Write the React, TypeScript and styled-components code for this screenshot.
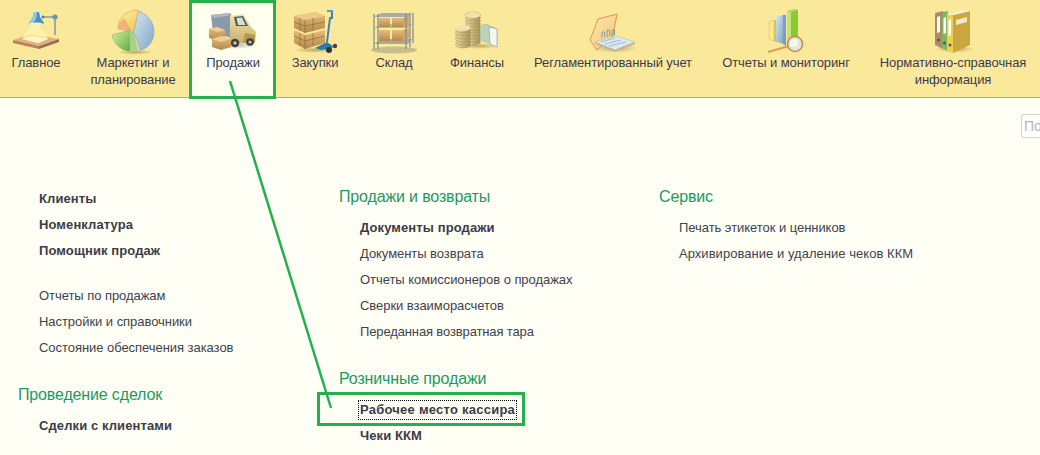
import React from 'react';
import styled, { createGlobalStyle } from 'styled-components';

const Global = createGlobalStyle`
  html, body { margin: 0; padding: 0; height: 100%; overflow: hidden; background: #fffff5; }
  #root { width: 1040px; height: 455px; }
`;
const Page = styled.div`
  position: relative; width: 1040px; height: 455px; overflow: hidden;
  background: #fffff5; color: #3c3c4a;
  font-family: "Liberation Sans", Arial, sans-serif; font-size: 13px;
`;
const TopBar = styled.nav`
  display: flex; height: 97px; background: #fbe99b; border-bottom: 1px solid #c4ae3a; box-sizing: content-box;
`;
const NavItem = styled.div<{ $w: number; $active?: boolean; $ml?: number }>`
  width: ${p => p.$w}px; margin-left: ${p => p.$ml ?? 0}px; flex: none;
  display: flex; flex-direction: column; align-items: center;
  padding: 8px 0 0 ${p => (p.$active ? 2 : 0)}px; box-sizing: border-box;
  background: ${p => (p.$active ? '#fffff0' : 'transparent')};
`;
const NavIcon = styled.svg`
  width: 48px; height: 48px; flex: none; display: block;
`;
const NavLabel = styled.div`
  margin-top: -1px; text-align: center; line-height: 16.5px; letter-spacing: -0.1px; color: #3b3b50; white-space: pre-line;
`;
const SearchRow = styled.div`
  display: flex; justify-content: flex-end; margin-top: 16px; height: 24px;
`;
const SearchBox = styled.div`
  width: 19px; height: 24px; box-sizing: border-box; border: 1px solid #d4d4d4; border-right: 0; border-radius: 3px 0 0 3px;
  padding-left: 2px; line-height: 22px; font-size: 14px; color: #b5b5b5; background: #fffffb; white-space: nowrap;
`;
const Columns = styled.div`
  display: grid; grid-template-columns: 321px 320px 1fr; padding: 48px 0 0 18px;
`;
const Column = styled.div<{ $pt?: number }>`
  display: flex; flex-direction: column; padding-top: ${p => p.$pt ?? 0}px;
`;
const Heading = styled.h3<{ $mt?: number }>`
  margin: ${p => p.$mt ?? 0}px 0 8px; font-weight: 400; font-size: 16px; line-height: 20px; letter-spacing: -0.15px; color: #1a9a62;
`;
const LinkList = styled.div<{ $mt?: number; $pl?: number }>`
  display: flex; flex-direction: column; padding-left: ${p => p.$pl ?? 21}px; margin-top: ${p => p.$mt ?? 0}px;
`;
const Item = styled.div<{ $bold?: boolean; $ls?: number }>`
  height: 26px; line-height: 26px; white-space: nowrap; font-weight: ${p => (p.$bold ? 700 : 400)};
  letter-spacing: ${p => p.$ls ?? (p.$bold ? 0.1 : -0.05)}px;
  color: ${p => (p.$bold ? '#3c3c48' : '#42424e')};
`;
const FocusedText = styled.span`
  display: inline-block; line-height: 18px; letter-spacing: 0.24px; outline: 1px dotted #000; padding: 0 1px; margin-left: -1px;
`;
const Mark = styled.div<{ $x: number; $y: number; $w: number; $h: number }>`
  position: absolute; left: ${p => p.$x}px; top: ${p => p.$y}px; width: ${p => p.$w}px; height: ${p => p.$h}px;
  box-sizing: border-box; border: 3px solid #22b14c; pointer-events: none;
`;
const Arrow = styled.svg`
  position: absolute; left: 0; top: 0; width: 1040px; height: 455px; pointer-events: none;
`;

const Defs = () => (
  <svg width="0" height="0" style={{ position: 'absolute' }}>
    <defs>
      <linearGradient id="box" x1="0" y1="0" x2="0" y2="1"><stop offset="0" stopColor="#e6bd78" /><stop offset="1" stopColor="#b58a4a" /></linearGradient>
      <linearGradient id="blue" x1="0" y1="0" x2="1" y2="1"><stop offset="0" stopColor="#d5e6f2" /><stop offset="1" stopColor="#7fa6c6" /></linearGradient>
      <linearGradient id="green" x1="0" y1="0" x2="1" y2="1"><stop offset="0" stopColor="#d9f0a8" /><stop offset="1" stopColor="#62ad3e" /></linearGradient>
      <linearGradient id="yel" x1="0" y1="0" x2="1" y2="1"><stop offset="0" stopColor="#fff2a8" /><stop offset="1" stopColor="#f0c040" /></linearGradient>
      <linearGradient id="coin" x1="0" y1="0" x2="1" y2="0"><stop offset="0" stopColor="#ead9a0" /><stop offset="1" stopColor="#a89258" /></linearGradient>
      <linearGradient id="cover" x1="0" y1="0" x2="1" y2="1"><stop offset="0" stopColor="#fbe8ac" /><stop offset="1" stopColor="#f3c878" /></linearGradient>
      <linearGradient id="cab" x1="0" y1="0" x2="0" y2="1"><stop offset="0" stopColor="#f2e3a4" /><stop offset="1" stopColor="#c8b06a" /></linearGradient>
      <radialGradient id="shadow"><stop offset="0" stopColor="#6b5a20" stopOpacity=".45" /><stop offset="1" stopColor="#6b5a20" stopOpacity="0" /></radialGradient>
    </defs>
  </svg>
);

const Lamp = () => (
  <NavIcon viewBox="0 0 48 48">
    <path d="M1 32 19 26 47 31 27 38Z" fill="#e0b283" />
    <path d="M1 32 27 38V41L1 35Z" fill="#b9835a" /><path d="M27 38 47 31V34L27 41Z" fill="#9a6e4c" />
    <path d="M10 31 20 28 36 31 26 35Z" fill="#fffbe8" />
    <path d="M20 16H27L36 31 26 35 10 31Z" fill="#fff6b0" opacity=".75" />
    <path d="M31 9H43V27" fill="none" stroke="#8d9aa3" strokeWidth="1.6" />
    <circle cx="43" cy="9" r="2.6" fill="#6f93ab" /><circle cx="31" cy="9" r="1.5" fill="#5c7f96" />
    <path d="M22 4h5l1 5 4 6c-3 3-12 3-15 0l4-6Z" fill="#3f93c9" />
    <path d="M22 4h3l-1 7-4 5-3-1 4-6Z" fill="#8ccbe8" />
    <ellipse cx="24" cy="16" rx="6.5" ry="1.6" fill="#fdf4b0" />
  </NavIcon>
);
const Pie = () => (
  <NavIcon viewBox="0 0 48 48">
    <ellipse cx="26" cy="44" rx="18" ry="3" fill="url(#shadow)" />
    <path d="M9 21C8 11 17 2 28 2L32 4 25 24Z" fill="url(#yel)" stroke="#e6a860" strokeWidth=".7" />
    <path d="M9 21C9 17 11 13 15 10L23 23Z" fill="#f2b07a" />
    <path d="M29 4C39 5 45 15 45 24 45 33 39 41 31 42L25 24Z" fill="url(#blue)" stroke="#7d9db5" strokeWidth=".5" />
    <path d="M3 27 21 22V43C12 43 5 36 3 27Z" fill="url(#green)" stroke="#79b158" strokeWidth=".5" />
    <path d="M21 22 25 24 29 42 21 43Z" fill="#a9d18b" />
  </NavIcon>
);
const Truck = () => (
  <NavIcon viewBox="0 0 48 48">
    <ellipse cx="26" cy="37" rx="22" ry="4" fill="url(#shadow)" />
    <path d="M2 7 21 5 22 8V30L4 24Z" fill="#8b99ad" /><path d="M2 7 21 5 23 7 5 10Z" fill="#aeb9c6" />
    <path d="M21 8 34 6 42 19 47 24 46 35 21 35Z" fill="url(#cab)" />
    <path d="M25 9 34 8 39 18 27 18Z" fill="#4e5a5e" /><path d="M27.5 10 33 9.5 36.5 17 29 17Z" fill="#d7dfd6" />
    <path d="M36 25 46 27 46 35 34 35Z" fill="#b4984e" />
    <circle cx="26" cy="35" r="4.2" fill="#3d3d3d" /><circle cx="26" cy="35" r="1.8" fill="#c4c4c4" />
    <circle cx="41" cy="34" r="3.8" fill="#3d3d3d" /><circle cx="41" cy="34" r="1.6" fill="#c4c4c4" />
    <path d="M0 21 8 19 16 22V31L8 33 0 30Z" fill="url(#box)" /><path d="M0 21 8 19 16 22 8 24Z" fill="#eecd92" />
    <path d="M3 31 13 28 22 31V39L12 42 3 39Z" fill="url(#box)" /><path d="M3 31 13 28 22 31 12 34Z" fill="#eecd92" />
  </NavIcon>
);
const Pallet = () => (
  <NavIcon viewBox="0 0 48 48">
    <ellipse cx="24" cy="42" rx="22" ry="3" fill="url(#shadow)" />
    <path d="M3 8 24 4 34 8V20L14 25 3 20Z" fill="url(#box)" /><path d="M3 8 24 4 34 8 14 12Z" fill="#ecca8e" />
    <path d="M3 22 14 27 34 22V35L14 41 3 35Z" fill="url(#box)" />
    <path d="M14 12V25M14 27V41M9 10V23M9 25V38M22 10V23M22 25V37M3 14 14 18 34 14M3 28 14 33 34 28" stroke="#8d6a38" strokeWidth=".7" fill="none" />
    <path d="M36 3h5v7h-2L36 34" stroke="#3f82b5" strokeWidth="2" fill="none" />
    <path d="M36 3h6" stroke="#5b9ecf" strokeWidth="2" />
    <path d="M24 40 36 34 43 39 37 41 30 42Z" fill="#2e78ae" />
    <circle cx="38" cy="42" r="3" fill="#333" /><circle cx="44" cy="38" r="2.2" fill="#444" />
  </NavIcon>
);
const Shelf = () => (
  <NavIcon viewBox="0 0 48 48">
    <ellipse cx="24" cy="42" rx="23" ry="3.5" fill="#8a8a7a" opacity=".45" />
    <path d="M5 19 12 16H42L38 20H5Z" fill="#b1b5b8" />
    <path d="M5 35 12 31H42L38 36H5Z" fill="#a4a8ab" />
    <path d="M5 8 12 5H42L38 9H5Z" fill="#a8acaf" />
    <path d="M9 10H20V19H9ZM22 10H33V19H22Z" fill="url(#box)" />
    <path d="M9 22H20V33H9ZM22 22H33V33H22Z" fill="url(#box)" />
    <path d="M33 10 39 8V17L33 19ZM33 22 39 20V30L33 33Z" fill="#cfa865" />
    <path d="M4 6V41M8 6V41M36 6V41M40 6V39M43 5V35" stroke="#8a8f93" strokeWidth="1.3" fill="none" />
  </NavIcon>
);
const Coins = () => {
  const stack = (x: number, top: number, bottom: number, rx: number) => {
    const rows = [];
    for (let y = bottom; y >= top; y -= 3) rows.push(<ellipse key={y} cx={x} cy={y} rx={rx} ry="3" fill="url(#coin)" stroke="#96844e" strokeWidth=".4" />);
    return <g>{rows}</g>;
  };
  return (
    <NavIcon viewBox="0 0 48 48">
      <ellipse cx="26" cy="38" rx="20" ry="3" fill="url(#shadow)" />
      {stack(20, 7, 34, 7.5)}
      <ellipse cx="20" cy="7" rx="7.5" ry="3" fill="#efe2b0" />
      <path d="M27 18 33 16 44 21V39L36 35 27 32Z" fill="#bcd2b8" stroke="#8aa088" strokeWidth=".4" />
      <path d="M36 19 44 21V39L37 36Z" fill="#f5f7f2" stroke="#8b9a95" strokeWidth=".6" />
      {stack(10, 20, 37, 7.5)}
      <ellipse cx="10" cy="20" rx="7.5" ry="3" fill="#efe2b0" />
    </NavIcon>
  );
};
const Notebook = () => (
  <NavIcon viewBox="0 0 48 48">
    <ellipse cx="26" cy="40" rx="22" ry="5" fill="url(#shadow)" />
    <path d="M1 32 9 11 28 6 24 28 8 42Z" fill="url(#cover)" stroke="#e0964a" strokeWidth="1" />
    <path d="M6 36 27 30 46 36 26 44Z" fill="#a8c6dc" />
    <path d="M6 34 27 28 46 34 26 42Z" fill="#dde9f1" stroke="#9db4c4" strokeWidth=".5" />
    <path d="M12 34 26 30M16 36 32 32M20 38 37 34" stroke="#8fb0c8" strokeWidth=".8" />
    <path d="M6 35 26 43 46 35" stroke="#f0a84c" strokeWidth="1" fill="none" />
    <path d="M13 30V25a1.3 1.3 0 0 1 2.6 0V29M18 29V23a1.3 1.3 0 0 1 2.6 0V28M23 28V23a1.3 1.3 0 0 1 2.6 0V27" stroke="#7f8e9a" strokeWidth=".9" fill="none" />
  </NavIcon>
);
const Chart = () => (
  <NavIcon viewBox="0 0 48 48">
    <path d="M7 14 12 12V33L7 31Z" fill="#fbe98e" stroke="#cdb75c" strokeWidth=".5" /><path d="M12 12h4v23l-4-2Z" fill="#d9c15c" />
    <path d="M14 9 21 7V36L14 33Z" fill="url(#blue)" /><path d="M21 7h3v31l-3-2Z" fill="#7a9ec0" />
    <path d="M25 3 32 1 36 2V31H31L25 34Z" fill="#8cc832" /><path d="M25 3 32 1 36 2 29 4Z" fill="#b6df6c" />
    <path d="M25 3 29 4V35L25 33Z" fill="#c0e37a" />
    <path d="M6 44 27 38" stroke="#d9a050" strokeWidth="2" />
    <circle cx="33" cy="36" r="7.5" fill="#dce8e0" stroke="#d4884a" strokeWidth="1.6" />
    <circle cx="32" cy="35" r="4" fill="#f4f8f2" />
  </NavIcon>
);
const Folders = () => (
  <NavIcon viewBox="0 0 48 48">
    <ellipse cx="26" cy="41" rx="20" ry="4" fill="url(#shadow)" />
    <path d="M6 5 14 3V41L6 37Z" fill="#b08a68" /><path d="M13 4 19 3V43L13 40Z" fill="#82b65e" />
    <path d="M18 7 24 5V45L18 43Z" fill="#efd04a" />
    <path d="M24 7 41 3V37L24 45Z" fill="#c9a63e" /><path d="M17 7 35 2 41 3 24 7Z" fill="#f5f0dd" />
    <path d="M27 12 38 9V14L27 17Z" fill="#efe7c5" />
    <path d="M8 9 11 8V24L8 25ZM14.5 10 17 9V25L14.5 26ZM19.5 12 22 11V27L19.5 28Z" fill="#fff" />
    <circle cx="9.5" cy="32" r="1.5" fill="#555" /><circle cx="15.5" cy="35" r="1.5" fill="#555" /><circle cx="21" cy="37" r="1.5" fill="#555" />
  </NavIcon>
);

const nav = [
  { w: 72, label: 'Главное', Icon: Lamp },
  { w: 114, ml: 4, label: 'Маркетинг и\nпланирование', Icon: Pie },
  { w: 84, label: 'Продажи', Icon: Truck, active: true },
  { w: 82, label: 'Закупки', Icon: Pallet },
  { w: 76, label: 'Склад', Icon: Shelf },
  { w: 90, label: 'Финансы', Icon: Coins },
  { w: 182, label: 'Регламентированный учет', Icon: Notebook },
  { w: 164, label: 'Отчеты и мониторинг', Icon: Chart },
  { w: 170, label: 'Нормативно-справочная\nинформация', Icon: Folders },
];

export default function App() {
  return (
    <Page>
      <Global />
      <Defs />
      <TopBar>
        {nav.map(({ w, ml, label, Icon, active }) => (
          <NavItem key={label} $w={w} $ml={ml} $active={active}>
            <Icon />
            <NavLabel>{label}</NavLabel>
          </NavItem>
        ))}
      </TopBar>
      <SearchRow><SearchBox>По</SearchBox></SearchRow>
      <Columns>
        <Column>
          <LinkList>
            <Item $bold>Клиенты</Item>
            <Item $bold>Номенклатура</Item>
            <Item $bold>Помощник продаж</Item>
          </LinkList>
          <LinkList $mt={19}>
            <Item>Отчеты по продажам</Item>
            <Item>Настройки и справочники</Item>
            <Item>Состояние обеспечения заказов</Item>
          </LinkList>
          <Heading $mt={24}>Проведение сделок</Heading>
          <LinkList>
            <Item $bold>Сделки с клиентами</Item>
          </LinkList>
        </Column>
        <Column $pt={1}>
          <Heading>Продажи и возвраты</Heading>
          <LinkList>
            <Item $bold>Документы продажи</Item>
            <Item>Документы возврата</Item>
            <Item>Отчеты комиссионеров о продажах</Item>
            <Item>Сверки взаиморасчетов</Item>
            <Item $ls={-0.13}>Переданная возвратная тара</Item>
          </LinkList>
          <Heading $mt={24}>Розничные продажи</Heading>
          <LinkList>
            <Item $bold><FocusedText>Рабочее место кассира</FocusedText></Item>
            <Item $bold>Чеки ККМ</Item>
          </LinkList>
        </Column>
        <Column $pt={1}>
          <Heading>Сервис</Heading>
          <LinkList $pl={20}>
            <Item>Печать этикеток и ценников</Item>
            <Item $ls={0.04}>Архивирование и удаление чеков ККМ</Item>
          </LinkList>
        </Column>
      </Columns>
      <Mark $x={189} $y={0} $w={87} $h={99} />
      <Mark $x={317} $y={392} $w={208} $h={34} />
      <Arrow viewBox="0 0 1040 455"><path d="M230 81 331 408" stroke="#22b14c" strokeWidth="2.5" /></Arrow>
    </Page>
  );
}
